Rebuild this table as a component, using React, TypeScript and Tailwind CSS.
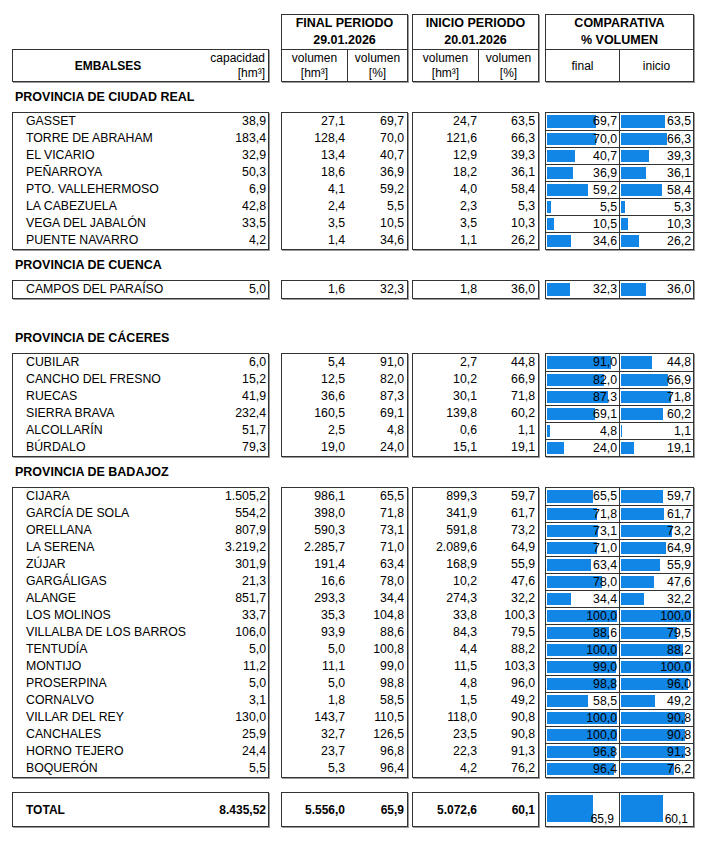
import React from 'react';

// nombre, capacidad, final vol, final %, inicio vol, inicio %
type Fila = [string, string, string, string, string, string];

interface Provincia {
    nombre: string;
    filas: Fila[];
}

const provincias: Provincia[] = [
    {
        nombre: 'PROVINCIA DE CIUDAD REAL',
        filas: [
            ['GASSET', '38,9', '27,1', '69,7', '24,7', '63,5'],
            ['TORRE DE ABRAHAM', '183,4', '128,4', '70,0', '121,6', '66,3'],
            ['EL VICARIO', '32,9', '13,4', '40,7', '12,9', '39,3'],
            ['PEÑARROYA', '50,3', '18,6', '36,9', '18,2', '36,1'],
            ['PTO. VALLEHERMOSO', '6,9', '4,1', '59,2', '4,0', '58,4'],
            ['LA CABEZUELA', '42,8', '2,4', '5,5', '2,3', '5,3'],
            ['VEGA DEL JABALÓN', '33,5', '3,5', '10,5', '3,5', '10,3'],
            ['PUENTE NAVARRO', '4,2', '1,4', '34,6', '1,1', '26,2'],
        ],
    },
    {
        nombre: 'PROVINCIA DE CUENCA',
        filas: [['CAMPOS DEL PARAÍSO', '5,0', '1,6', '32,3', '1,8', '36,0']],
    },
    {
        nombre: 'PROVINCIA DE CÁCERES',
        filas: [
            ['CUBILAR', '6,0', '5,4', '91,0', '2,7', '44,8'],
            ['CANCHO DEL FRESNO', '15,2', '12,5', '82,0', '10,2', '66,9'],
            ['RUECAS', '41,9', '36,6', '87,3', '30,1', '71,8'],
            ['SIERRA BRAVA', '232,4', '160,5', '69,1', '139,8', '60,2'],
            ['ALCOLLARÍN', '51,7', '2,5', '4,8', '0,6', '1,1'],
            ['BÚRDALO', '79,3', '19,0', '24,0', '15,1', '19,1'],
        ],
    },
    {
        nombre: 'PROVINCIA DE BADAJOZ',
        filas: [
            ['CIJARA', '1.505,2', '986,1', '65,5', '899,3', '59,7'],
            ['GARCÍA DE SOLA', '554,2', '398,0', '71,8', '341,9', '61,7'],
            ['ORELLANA', '807,9', '590,3', '73,1', '591,8', '73,2'],
            ['LA SERENA', '3.219,2', '2.285,7', '71,0', '2.089,6', '64,9'],
            ['ZÚJAR', '301,9', '191,4', '63,4', '168,9', '55,9'],
            ['GARGÁLIGAS', '21,3', '16,6', '78,0', '10,2', '47,6'],
            ['ALANGE', '851,7', '293,3', '34,4', '274,3', '32,2'],
            ['LOS MOLINOS', '33,7', '35,3', '104,8', '33,8', '100,3'],
            ['VILLALBA DE LOS BARROS', '106,0', '93,9', '88,6', '84,3', '79,5'],
            ['TENTUDÍA', '5,0', '5,0', '100,8', '4,4', '88,2'],
            ['MONTIJO', '11,2', '11,1', '99,0', '11,5', '103,3'],
            ['PROSERPINA', '5,0', '5,0', '98,8', '4,8', '96,0'],
            ['CORNALVO', '3,1', '1,8', '58,5', '1,5', '49,2'],
            ['VILLAR DEL REY', '130,0', '143,7', '110,5', '118,0', '90,8'],
            ['CANCHALES', '25,9', '32,7', '126,5', '23,5', '90,8'],
            ['HORNO TEJERO', '24,4', '23,7', '96,8', '22,3', '91,3'],
            ['BOQUERÓN', '5,5', '5,3', '96,4', '4,2', '76,2'],
        ],
    },
];

const aNumero = (s: string) => parseFloat(s.replace(/\./g, '').replace(',', '.'));
// la comparativa se corta en 100
const tope = (s: string) => (aNumero(s) > 100 ? '100,0' : s);

const caja = 'border border-[#333] shadow-[1px_1px_0_#9a9a9a]';

const Barra: React.FC<{ valor: string }> = ({ valor }) => {
    const pct = Math.min(aNumero(valor), 100);
    return (
        <div className="relative h-full flex items-center justify-end pr-[2px]">
            <div className="absolute left-[1px] top-[2px] bottom-[2px] bg-[#1186e6]" style={{ width: `${pct * 0.7}px` }}></div>
            <span className="relative">{tope(valor)}</span>
        </div>
    );
};

const Seccion: React.FC<{ p: Provincia; espacio?: boolean }> = ({ p, espacio }) => (
    <>
        <div className="h-[30px] flex items-center pl-[15px] font-bold text-[12.5px]">{p.nombre}</div>
        <div className={`flex pl-[12px] text-[12.3px] ${espacio ? 'mb-[24px]' : ''}`}>
            {/* Embalse y capacidad */}
            <div className={`w-[257px] ${caja}`}>
                {p.filas.map((f) => (
                    <div key={f[0]} className="h-[17px] flex items-center justify-between pl-[13px] pr-[2px]">
                        <span>{f[0]}</span>
                        <span>{f[1]}</span>
                    </div>
                ))}
            </div>

            {/* Final periodo */}
            <div className={`ml-[12px] w-[127px] ${caja}`}>
                {p.filas.map((f) => (
                    <div key={f[0]} className="h-[17px] flex items-center">
                        <span className="w-[66px] text-right pr-[3px]">{f[2]}</span>
                        <span className="flex-1 text-right pr-[3px]">{f[3]}</span>
                    </div>
                ))}
            </div>

            {/* Inicio periodo */}
            <div className={`ml-[4px] w-[127px] ${caja}`}>
                {p.filas.map((f) => (
                    <div key={f[0]} className="h-[17px] flex items-center">
                        <span className="w-[66px] text-right pr-[2px]">{f[4]}</span>
                        <span className="flex-1 text-right pr-[3px]">{f[5]}</span>
                    </div>
                ))}
            </div>

            {/* Comparativa */}
            <div className={`ml-[6px] w-[149px] ${caja}`}>
                {p.filas.map((f, i) => (
                    <div key={f[0]} className={`h-[17px] flex ${i > 0 ? 'border-t border-[#333]' : ''}`}>
                        <div className="w-[74px] border-r border-[#333]">
                            <Barra valor={f[3]} />
                        </div>
                        <div className="flex-1">
                            <Barra valor={f[5]} />
                        </div>
                    </div>
                ))}
            </div>
        </div>
    </>
);

const App: React.FC = () => {
    return (
        <div className="w-[709px] h-[843px] bg-white text-black text-[12px] leading-none pt-[14px]" style={{ fontFamily: '"Liberation Sans", Arial, sans-serif' }}>
            {/* Cabecera */}
            <div className="flex pl-[12px] items-end">
                <div className={`w-[257px] h-[33px] flex items-center ${caja}`}>
                    <div className="w-[190px] text-center font-bold">EMBALSES</div>
                    <div className="flex-1 flex flex-col items-end pr-[3px] leading-[15px]">
                        <span>capacidad</span>
                        <span>[hm³]</span>
                    </div>
                </div>

                <div className={`ml-[12px] w-[127px] h-[68px] flex flex-col ${caja}`}>
                    <div className="h-[35px] border-b border-[#333] flex flex-col items-center justify-center font-bold text-[12.5px] leading-[17px]">
                        <span>FINAL PERIODO</span>
                        <span>29.01.2026</span>
                    </div>
                    <div className="flex-1 flex leading-[15px]">
                        <div className="w-[66px] border-r border-[#333] flex flex-col items-center justify-center">
                            <span>volumen</span>
                            <span>[hm³]</span>
                        </div>
                        <div className="flex-1 flex flex-col items-center justify-center">
                            <span>volumen</span>
                            <span>[%]</span>
                        </div>
                    </div>
                </div>

                <div className={`ml-[4px] w-[127px] h-[68px] flex flex-col ${caja}`}>
                    <div className="h-[35px] border-b border-[#333] flex flex-col items-center justify-center font-bold text-[12.5px] leading-[17px]">
                        <span>INICIO PERIODO</span>
                        <span>20.01.2026</span>
                    </div>
                    <div className="flex-1 flex leading-[15px]">
                        <div className="w-[66px] border-r border-[#333] flex flex-col items-center justify-center">
                            <span>volumen</span>
                            <span>[hm³]</span>
                        </div>
                        <div className="flex-1 flex flex-col items-center justify-center">
                            <span>volumen</span>
                            <span>[%]</span>
                        </div>
                    </div>
                </div>

                <div className={`ml-[6px] w-[149px] h-[68px] flex flex-col ${caja}`}>
                    <div className="h-[35px] border-b border-[#333] flex flex-col items-center justify-center font-bold text-[12.5px] leading-[17px]">
                        <span>COMPARATIVA</span>
                        <span>% VOLUMEN</span>
                    </div>
                    <div className="flex-1 flex">
                        <div className="w-[74px] border-r border-[#333] flex items-center justify-center">final</div>
                        <div className="flex-1 flex items-center justify-center">inicio</div>
                    </div>
                </div>
            </div>

            {provincias.map((p) => (
                <Seccion key={p.nombre} p={p} espacio={p.nombre === 'PROVINCIA DE CUENCA'} />
            ))}

            {/* Total */}
            <div className="flex pl-[12px] mt-[14px] font-bold">
                <div className={`w-[257px] h-[35px] flex items-center justify-between pl-[13px] pr-[2px] ${caja}`}>
                    <span>TOTAL</span>
                    <span>8.435,52</span>
                </div>
                <div className={`ml-[12px] w-[127px] h-[35px] flex items-center ${caja}`}>
                    <span className="w-[66px] text-right pr-[3px]">5.556,0</span>
                    <span className="flex-1 text-right pr-[3px]">65,9</span>
                </div>
                <div className={`ml-[4px] w-[127px] h-[35px] flex items-center ${caja}`}>
                    <span className="w-[66px] text-right pr-[2px]">5.072,6</span>
                    <span className="flex-1 text-right pr-[3px]">60,1</span>
                </div>
                <div className={`ml-[6px] w-[149px] h-[35px] flex font-normal ${caja}`}>
                    <div className="relative w-[74px] border-r border-[#333] flex items-end justify-end pr-[5px] pb-[1px]">
                        <div className="absolute left-[1px] top-[2px] bottom-[4px] w-[46px] bg-[#1186e6]"></div>
                        <span className="relative">65,9</span>
                    </div>
                    <div className="relative flex-1 flex items-end justify-end pr-[5px] pb-[1px]">
                        <div className="absolute left-[1px] top-[2px] bottom-[4px] w-[42px] bg-[#1186e6]"></div>
                        <span className="relative">60,1</span>
                    </div>
                </div>
            </div>
        </div>
    );
};

export default App;
